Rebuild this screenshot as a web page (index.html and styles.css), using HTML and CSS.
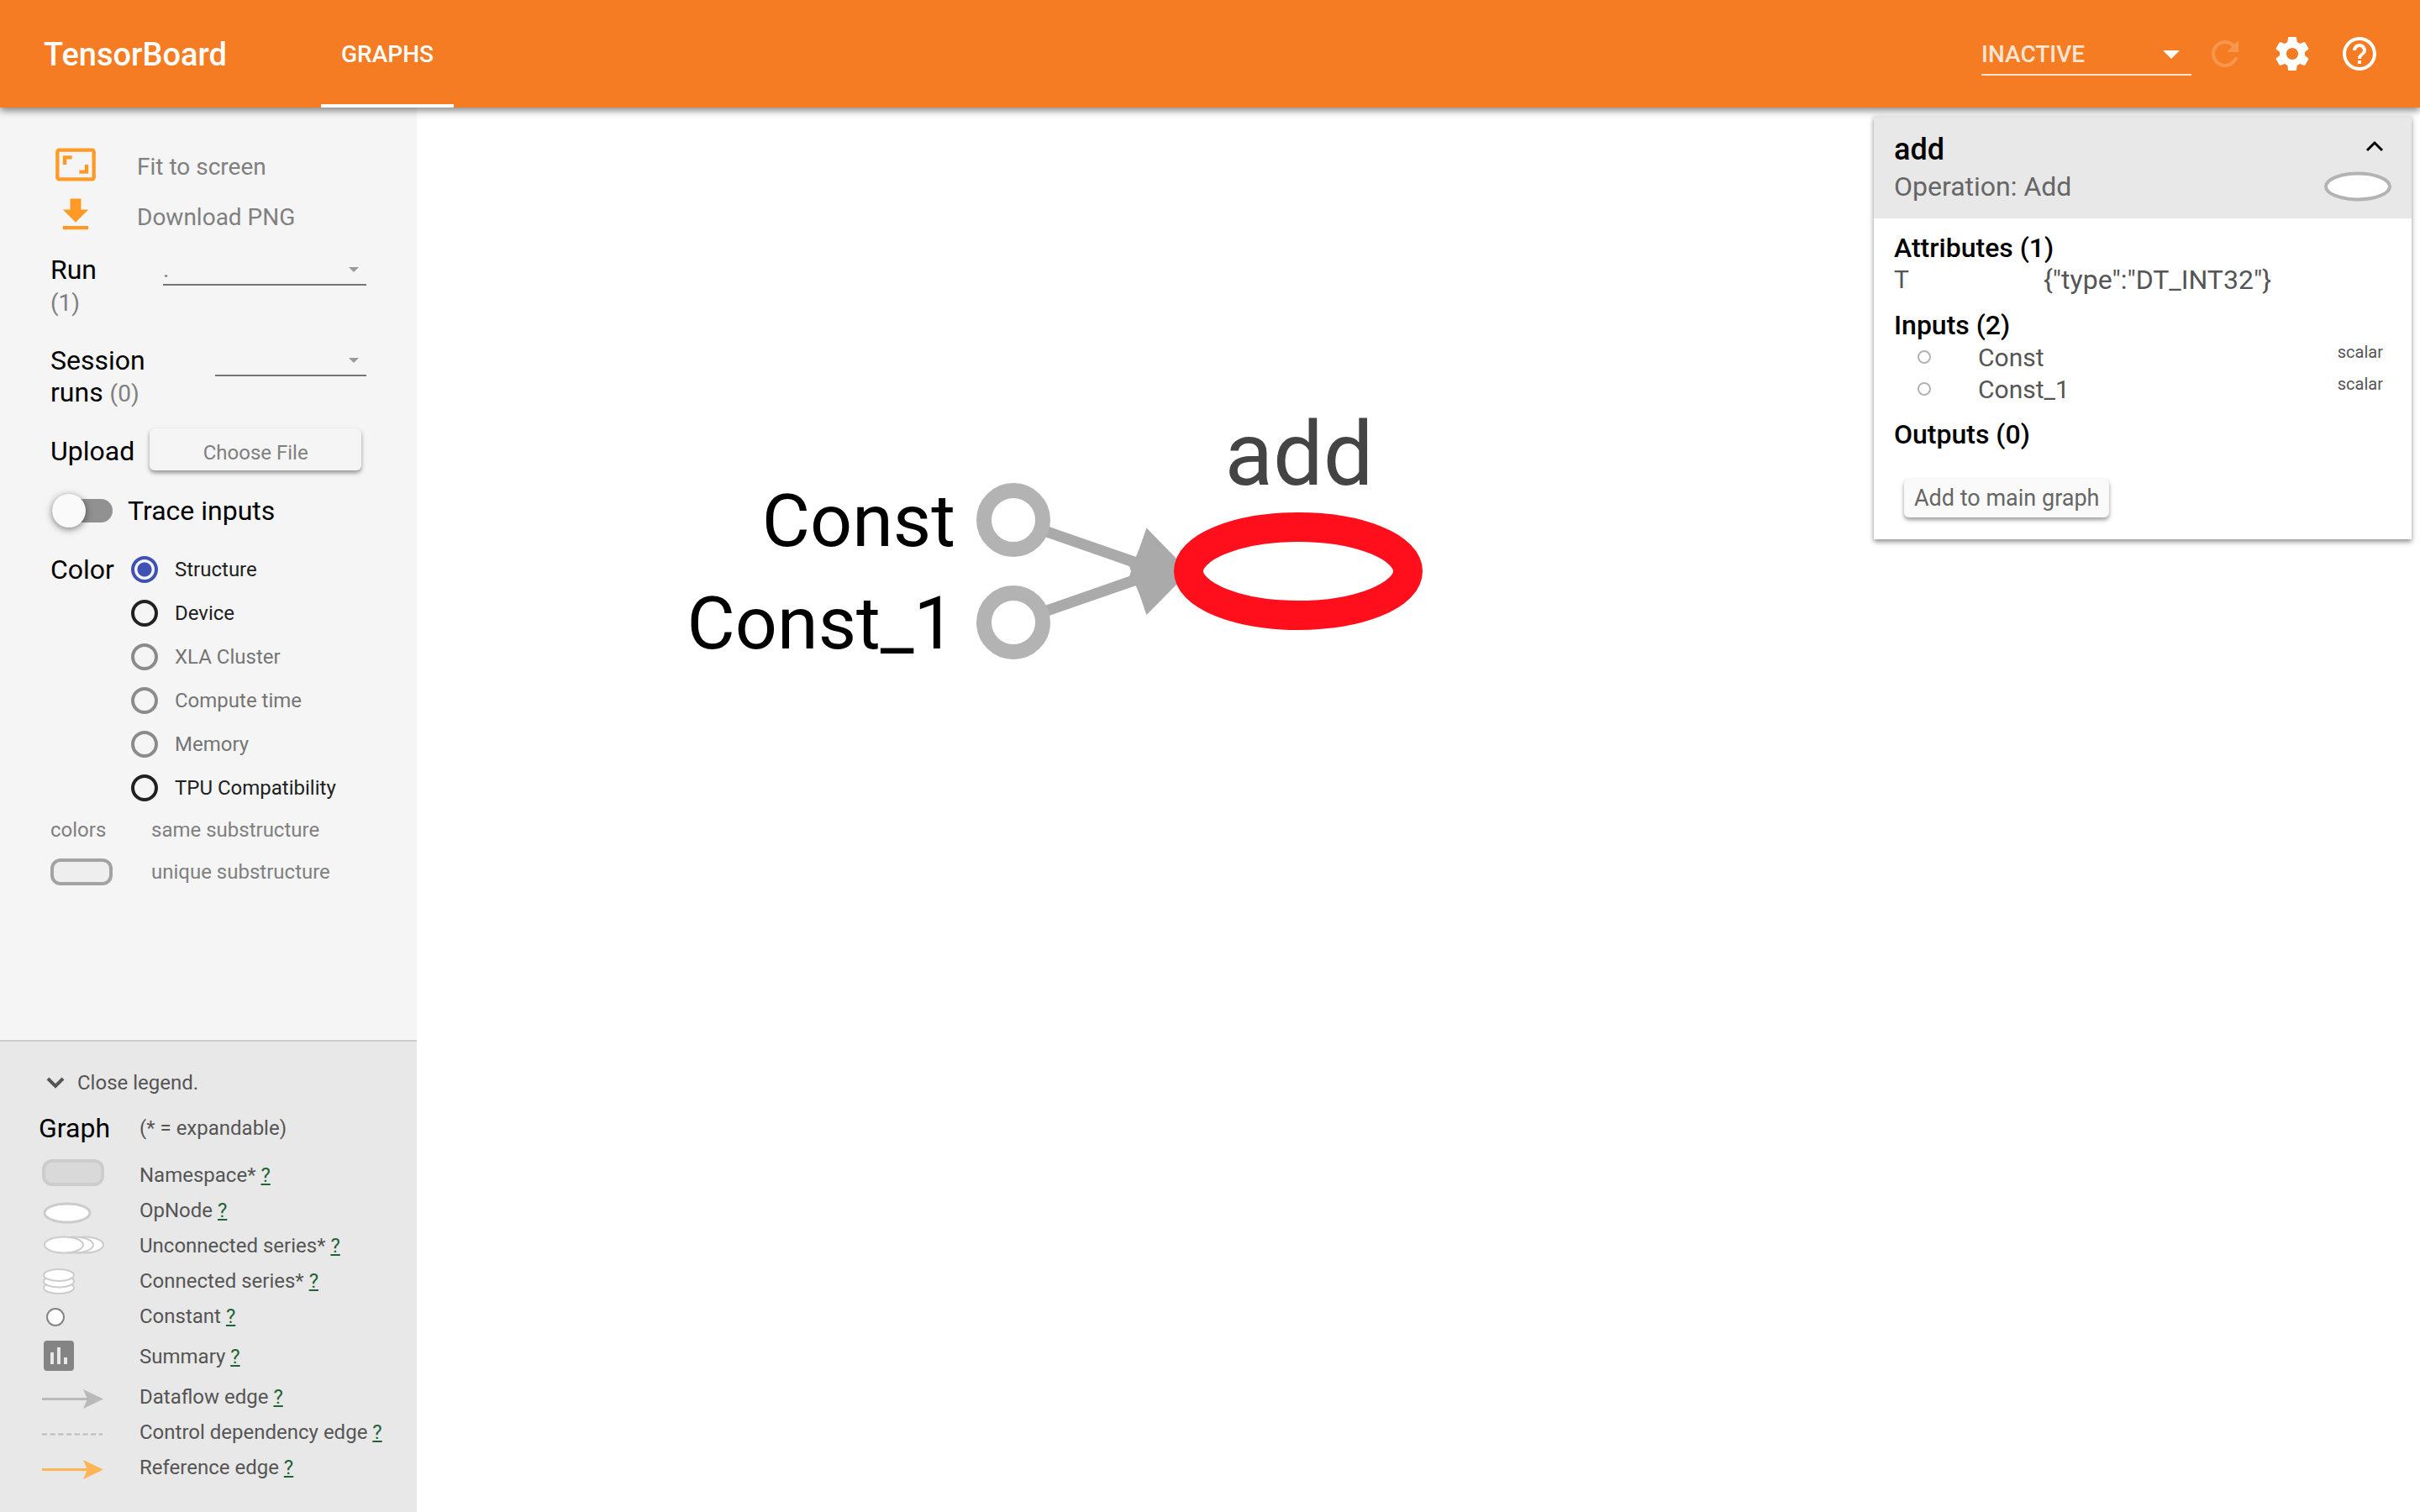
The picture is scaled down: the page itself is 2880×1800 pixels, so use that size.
FILE: index.html
```html
<!DOCTYPE html>
<html lang="en">
<head>
<meta charset="utf-8">
<title>TensorBoard</title>
<link rel="stylesheet" href="styles.css">
</head>
<body>
<header class="toolbar">
  <h1 class="brand">TensorBoard</h1>
  <nav class="tabs"><a class="tab" href="#graphs">GRAPHS</a></nav>
  <div class="toolbar-actions">
    <div class="field field-light">
      <select class="field-select" aria-label="Inactive dashboards"><option>INACTIVE</option></select>
    </div>
    <button class="icon-button" aria-label="Reload" disabled>
      <svg viewBox="0 0 24 24"><path d="M17.65 6.35C16.2 4.9 14.21 4 12 4c-4.42 0-7.99 3.58-7.99 8s3.57 8 7.99 8c3.73 0 6.84-2.55 7.73-6h-2.08c-.82 2.33-3.04 4-5.65 4-3.31 0-6-2.69-6-6s2.69-6 6-6c1.66 0 3.14.69 4.22 1.78L13 11h7V4l-2.35 2.35z"/></svg>
    </button>
    <button class="icon-button" aria-label="Settings">
      <svg viewBox="0 0 24 24"><path d="M19.43 12.98c.04-.32.07-.64.07-.98s-.03-.66-.07-.98l2.11-1.65c.19-.15.24-.42.12-.64l-2-3.46c-.12-.22-.39-.3-.61-.22l-2.49 1c-.52-.4-1.08-.73-1.69-.98l-.38-2.65C14.46 2.18 14.25 2 14 2h-4c-.25 0-.46.18-.49.42l-.38 2.65c-.61.25-1.17.59-1.69.98l-2.49-1c-.23-.09-.49 0-.61.22l-2 3.46c-.13.22-.07.49.12.64l2.11 1.65c-.04.32-.07.65-.07.98s.03.66.07.98l-2.11 1.65c-.19.15-.24.42-.12.64l2 3.46c.12.22.39.3.61.22l2.49-1c.52.4 1.08.73 1.69.98l.38 2.65c.03.24.24.42.49.42h4c.25 0 .46-.18.49-.42l.38-2.65c.61-.25 1.17-.59 1.69-.98l2.49 1c.23.09.49 0 .61-.22l2-3.46c.12-.22.07-.49-.12-.64l-2.11-1.65zM12 15.5c-1.93 0-3.5-1.57-3.5-3.5s1.57-3.5 3.5-3.5 3.5 1.57 3.5 3.5-1.57 3.5-3.5 3.5z"/></svg>
    </button>
    <button class="icon-button" aria-label="Help">
      <svg viewBox="0 0 24 24"><path d="M11 18h2v-2h-2v2zm1-16C6.48 2 2 6.48 2 12s4.480 10 10 10 10-4.480 10-10S17.520 2 12 2zm0 18c-4.410 0-8-3.590-8-8s3.590-8 8-8 8 3.590 8 8-3.590 8-8 8zm0-14c-2.210 0-4 1.790-4 4h2c0-1.100.9-2 2-2s2 .9 2 2c0 2-3 1.750-3 5h2c0-2.250 3-2.500 3-5 0-2.210-1.790-4-4-4z"/></svg>
    </button>
  </div>
</header>

<div class="dashboard">
  <aside class="sidebar">
    <form class="controls">
      <button class="action" type="button">
        <svg viewBox="0 0 24 24"><path d="M19 12h-2v3h-3v2h5v-5zM7 9h3V7H5v5h2V9zm14-6H3c-1.100 0-2 .9-2 2v14c0 1.100.9 2 2 2h18c1.100 0 2-.9 2-2V5c0-1.100-.9-2-2-2zm0 16.010H3V4.990h18v14.020z"/></svg>
        <span>Fit to screen</span>
      </button>
      <button class="action" type="button">
        <svg viewBox="0 0 24 24"><path d="M19 9h-4V3H9v6H5l7 7 7-7zM5 18v2h14v-2H5z"/></svg>
        <span>Download PNG</span>
      </button>

      <div class="control-row run-row">
        <label class="control-label" for="run">Run <small class="count">(1)</small></label>
        <div class="field field-run"><select class="field-select" id="run"><option>.</option></select></div>
      </div>
      <div class="control-row session-row">
        <label class="control-label" for="session">Session runs <small class="count">(0)</small></label>
        <div class="field field-session"><select class="field-select" id="session"><option></option></select></div>
      </div>
      <div class="upload-row">
        <span class="control-label" id="upload-label">Upload</span>
        <button class="raised-button upload-button" type="button" aria-describedby="upload-label">Choose File</button>
      </div>
      <label class="toggle-row">
        <input class="toggle" type="checkbox">
        <span class="control-label">Trace inputs</span>
      </label>
      <div class="color-row" role="radiogroup" aria-labelledby="color-label">
        <span class="control-label" id="color-label">Color</span>
        <div class="radio-list">
          <label class="radio"><input type="radio" name="color" checked>Structure</label>
          <label class="radio"><input type="radio" name="color">Device</label>
          <label class="radio"><input type="radio" name="color" disabled>XLA Cluster</label>
          <label class="radio"><input type="radio" name="color" disabled>Compute time</label>
          <label class="radio"><input type="radio" name="color" disabled>Memory</label>
          <label class="radio"><input type="radio" name="color">TPU Compatibility</label>
        </div>
      </div>
      <div class="color-key">
        <span>colors</span><span>same substructure</span>
        <span class="swatch"></span><span>unique substructure</span>
      </div>
    </form>

    <section class="legend">
      <button class="legend-toggle" type="button">
        <svg viewBox="0 0 36 36"><path d="M9 13l9 9 9-9" fill="none" stroke="currentColor" stroke-width="4"/></svg>
        Close legend.
      </button>
      <div class="legend-head"><h2 class="legend-title">Graph</h2><span>(* = expandable)</span></div>
      <ul class="legend-list">
        <li>
          <svg viewBox="0 0 76 42"><rect x="4" y="4" width="70" height="28" rx="10" fill="#d9d9d9" stroke="#ccc" stroke-width="4"/></svg>
          <span>Namespace* <a href="#namespace">?</a></span>
        </li>
        <li>
          <svg viewBox="0 0 76 42"><ellipse cx="32" cy="24" rx="27" ry="11" fill="#fff" stroke="#ccc" stroke-width="3"/></svg>
          <span>OpNode <a href="#opnode">?</a></span>
        </li>
        <li>
          <svg viewBox="0 0 76 42"><g fill="#fff" stroke="#ccc" stroke-width="2"><ellipse cx="52" cy="20" rx="23" ry="9.500"/><ellipse cx="40" cy="20" rx="23" ry="9.500"/><ellipse cx="28" cy="20" rx="23" ry="9.500"/></g></svg>
          <span>Unconnected series* <a href="#unconnected">?</a></span>
        </li>
        <li>
          <svg viewBox="0 0 76 42"><g fill="#fff" stroke="#ccc" stroke-width="2"><ellipse cx="22" cy="29" rx="18" ry="7"/><ellipse cx="22" cy="21.500" rx="18" ry="7"/><ellipse cx="22" cy="14" rx="18" ry="7"/></g></svg>
          <span>Connected series* <a href="#connected">?</a></span>
        </li>
        <li>
          <svg viewBox="0 0 76 42"><circle cx="18" cy="22" r="10" fill="#fff" stroke="#848484" stroke-width="2"/></svg>
          <span>Constant <a href="#constant">?</a></span>
        </li>
        <li class="legend-summary">
          <svg viewBox="0 0 76 42"><path fill="#848484" fill-rule="evenodd" d="M8 2h28a4 4 0 0 1 4 4v28a4 4 0 0 1-4 4H8a4 4 0 0 1-4-4V6a4 4 0 0 1 4-4zM12 16v14h4V16zM20 10v20h4V10zM28 22v8h4v-8z"/></svg>
          <span>Summary <a href="#summary">?</a></span>
        </li>
        <li>
          <svg viewBox="0 0 76 42"><path d="M2 23.500h56" stroke="#b9b9b9" stroke-width="3"/><path fill="#b9b9b9" d="M51 12l24 11.500L51 35l5-11.500z"/></svg>
          <span>Dataflow edge <a href="#dataflow">?</a></span>
        </li>
        <li>
          <svg viewBox="0 0 76 42"><path d="M2 23.500h72" stroke="#b9b9b9" stroke-width="2" stroke-dasharray="6 3.700"/></svg>
          <span>Control dependency edge <a href="#control">?</a></span>
        </li>
        <li>
          <svg viewBox="0 0 76 42"><path d="M2 23.500h56" stroke="#ffb555" stroke-width="3"/><path fill="#ffb555" d="M51 12l24 11.500L51 35l5-11.500z"/></svg>
          <span>Reference edge <a href="#reference">?</a></span>
        </li>
      </ul>
    </section>
  </aside>

  <main class="canvas">
    <svg class="graph" aria-label="Graph">
      <path class="edge" d="M710 491L862 544M710 613L862 560"/>
      <path class="arrow" d="M868.500 500.500L905 538L921 552L905 567L868.500 604L860 579.500L855 567.500L853 560.500L847 561.500L850 552L847 543L853 543.500L855 537L860 524.500z"/>
      <circle class="const" cx="710" cy="491" r="35"/>
      <circle class="const" cx="710" cy="613" r="35"/>
      <ellipse class="op" cx="1049" cy="552" rx="130.500" ry="52.500"/>
      <text class="const-name" x="641" y="522">Const</text>
      <text class="const-name" x="641" y="644">Const_1</text>
      <text class="op-name" x="1050" y="449">add</text>
    </svg>

    <section class="info">
      <header class="info-head">
        <div class="info-line">
          <h2 class="info-title">add</h2>
          <button class="info-toggle" aria-label="Collapse">
            <svg viewBox="0 0 24 24"><path d="M3 17l9-9 9 9" fill="none" stroke="currentColor" stroke-width="3"/></svg>
          </button>
        </div>
        <div class="info-line info-sub">
          <span>Operation: Add</span>
          <svg class="info-shape" viewBox="0 0 80 36"><ellipse cx="40" cy="18" rx="38" ry="15.500" fill="#fff" stroke="#b3b3b3" stroke-width="4"/></svg>
        </div>
      </header>
      <div class="info-body">
        <h3 class="info-section">Attributes (1)</h3>
        <dl class="attributes"><dt>T</dt><dd>{"type":"DT_INT32"}</dd></dl>
        <h3 class="info-section">Inputs (2)</h3>
        <ul class="inputs">
          <li><svg viewBox="0 0 20 20"><circle cx="10" cy="10" r="7" fill="#fff" stroke="#b3b3b3" stroke-width="2"/></svg><a href="#const">Const</a><span class="shape">scalar</span></li>
          <li><svg viewBox="0 0 20 20"><circle cx="10" cy="10" r="7" fill="#fff" stroke="#b3b3b3" stroke-width="2"/></svg><a href="#const_1">Const_1</a><span class="shape">scalar</span></li>
        </ul>
        <h3 class="info-section">Outputs (0)</h3>
        <button class="raised-button add-button">Add to main graph</button>
      </div>
    </section>
  </main>
</div>
</body>
</html>
```
FILE: styles.css
```css
* { box-sizing: border-box; }

body {
  margin: 0;
  min-height: 100vh;
  display: flex;
  flex-direction: column;
  font-family: Roboto, "Liberation Sans", sans-serif;
  background: #fff;
}

h1, h2, h3, ul, dl, dd { margin: 0; padding: 0; font-weight: 400; list-style: none; }

button, select {
  margin: 0;
  padding: 0;
  border: 0;
  background: none;
  font: inherit;
  color: inherit;
}

svg { display: block; flex: none; }

/* Toolbar */
.toolbar {
  position: relative;
  z-index: 2;
  display: flex;
  align-items: center;
  height: 128px;
  padding: 0 48px 0 52px;
  background: #f57c22;
  color: #fff;
  box-shadow: 0 4px 8px rgba(0, 0, 0, .45);
}

.brand { width: 330px; padding-top: 2px; font-size: 38px; line-height: 48px; font-weight: 500; }
.tabs { align-self: stretch; display: flex; }

.tab {
  display: flex;
  align-items: center;
  padding: 4px 24px 0;
  border-bottom: 4px solid #fff;
  font-size: 28px;
  font-weight: 500;
  color: #fff;
  text-decoration: none;
}

.toolbar-actions { display: flex; align-items: center; margin-left: auto; }

.icon-button { display: flex; margin-left: 32px; color: #fff; }
.icon-button:disabled { margin-left: 16px; opacity: .2; }
.icon-button svg { width: 48px; height: 48px; fill: currentColor; }

/* Underlined drop-downs */
.field {
  position: relative;
  height: 38px;
  border-bottom: 2px solid #757575;
  color: #808080;
  font-size: 28px;
}

.field-select { display: block; width: 100%; height: 36px; appearance: none; }

.field::after {
  content: "";
  position: absolute;
  right: 9px;
  top: 16px;
  border: 6px solid transparent;
  border-top-color: #999;
  border-bottom: 0;
  pointer-events: none;
}

.field-light {
  width: 250px;
  height: 52px;
  border-bottom-color: #fde5d3;
  color: #fde5d3;
  font-weight: 500;
}

.field-light .field-select { height: 50px; padding-top: 2px; }

.field-light::after {
  right: 14px;
  top: 22px;
  border-width: 10px 10px 0;
  border-top-color: #fff;
}

.field-run { width: 242px; }
.field-session { width: 180px; }

/* Dashboard */
.dashboard { flex: 1; display: flex; }

.sidebar {
  display: flex;
  flex-direction: column;
  width: 496px;
  background: #f5f5f5;
}

.controls { padding: 38px 60px 40px; }

.action {
  display: flex;
  align-items: center;
  gap: 46px;
  height: 60px;
  padding-left: 4px;
  font-size: 28px;
  color: #808080;
}

.action svg { width: 52px; height: 52px; fill: #ff9a27; }
.action span { padding: 4px 0 0 1px; }

.control-row { display: flex; justify-content: space-between; }
.control-label { font-size: 32px; line-height: 38px; color: #000; }
.count { font-size: 28px; line-height: 1; color: #808080; }
.run-row { margin-top: 16px; }
.run-row .control-label { width: 60px; }
.session-row { margin-top: 32px; }
.session-row .control-label { width: 140px; }

.upload-row { display: flex; align-items: center; gap: 18px; margin-top: 24px; }
.upload-row .control-label { padding-top: 4px; }

.raised-button {
  border-radius: 6px;
  box-shadow: 0 3px 5px rgba(0, 0, 0, .4);
}

.upload-button {
  width: 252px;
  height: 50px;
  padding-top: 8px;
  background: #f5f5f5;
  font-size: 24px;
  color: #808080;
}

.toggle-row { display: flex; align-items: center; gap: 18px; height: 40px; margin-top: 28px; }

.toggle {
  appearance: none;
  display: flex;
  align-items: center;
  width: 72px;
  height: 28px;
  margin: 0 0 0 2px;
  border-radius: 14px;
  background: #919191;
}

.toggle::before {
  content: "";
  width: 40px;
  height: 40px;
  border-radius: 50%;
  background: #fafafa;
  box-shadow: 0 2px 8px rgba(0, 0, 0, .5);
}

.color-row { display: flex; margin-top: 24px; }
.color-row > .control-label { width: 96px; line-height: 52px; }

.radio {
  display: flex;
  align-items: center;
  gap: 20px;
  height: 52px;
  font-size: 24px;
  color: #212121;
}

.radio input {
  appearance: none;
  width: 32px;
  height: 32px;
  margin: 0;
  border: 4px solid #212121;
  border-radius: 50%;
}

.radio input:checked {
  border-color: #3f51b5;
  background: radial-gradient(circle, #3f51b5 8px, transparent 9px);
}

.radio:has(:disabled) { color: #757575; }
.radio input:disabled { border-color: #8b8b8b; }

.color-key {
  display: grid;
  grid-template-columns: 118px 1fr;
  grid-auto-rows: 48px;
  gap: 2px;
  align-items: center;
  font-size: 24px;
  color: #808080;
}

.swatch {
  width: 74px;
  height: 32px;
  border: 4px solid #a3a3a3;
  border-radius: 12px;
  background: #eee;
}

/* Legend */
.legend {
  margin-top: auto;
  padding: 24px 40px 32px 46px;
  border-top: 2px solid #ccc;
  background: #e8e8e8;
  font-size: 24px;
  color: #555;
}

.legend-toggle { display: flex; align-items: center; gap: 8px; height: 50px; padding-left: 2px; }
.legend-toggle svg { width: 36px; height: 36px; }

.legend-head { display: flex; align-items: center; height: 50px; margin: 4px 0 10px; }
.legend-title { width: 120px; font-size: 32px; color: #000; }

.legend-list li { display: flex; align-items: center; gap: 42px; height: 42px; padding-left: 2px; white-space: nowrap; }
.legend-list .legend-summary { height: 54px; }
.legend-list svg { width: 76px; height: 42px; }
.legend-list a { color: #1f6334; }

/* Graph canvas */
.canvas { position: relative; flex: 1; display: flex; }
.graph { flex: 1; width: 100%; }
.edge { stroke: #aaa; stroke-width: 13px; }
.arrow { fill: #aaa; }
.const { fill: #fff; stroke: #b3b3b3; stroke-width: 18px; }
.op { fill: #fff; stroke: #ff0f1b; stroke-width: 35px; }
.const-name { font-size: 88px; text-anchor: end; fill: #000; }
.op-name { font-size: 106px; text-anchor: middle; fill: #444; }

/* Node info card, floating over the canvas */
.info {
  position: absolute;
  top: 10px;
  right: 10px;
  width: 640px;
  background: #fff;
  color: #555;
  font-size: 30px;
  box-shadow: 0 3px 6px rgba(0, 0, 0, .45);
}

.info-head { padding: 16px 24px 18px; background: #e8e8e8; }
.info-line { display: flex; justify-content: space-between; align-items: center; height: 48px; }
.info-title { font-size: 36px; font-weight: 500; color: #000; }
.info-toggle { width: 24px; height: 24px; margin: 0 8px 8px 0; color: #000; }
.info-sub { height: 40px; font-size: 32px; color: #666; }
.info-shape { width: 80px; height: 36px; }

.info-body { padding: 16px 24px 26px; }
.info-section { font-size: 32px; line-height: 38px; font-weight: 500; color: #000; }
.attributes { display: flex; line-height: 38px; margin-bottom: 16px; }
.attributes dt { width: 178px; }
.attributes dd { font-size: 32px; }

.inputs { margin-bottom: 16px; }
.inputs li { display: flex; align-items: center; height: 38px; padding: 0 10px 0 26px; }
.inputs svg { width: 20px; height: 20px; margin-right: 54px; }
.inputs a { color: inherit; text-decoration: none; }
.shape { margin-left: auto; padding-bottom: 12px; font-size: 20px; }

.add-button {
  display: block;
  height: 46px;
  margin: 34px 0 0 12px;
  padding: 0 12px;
  background: #fafafa;
  font-size: 27px;
  color: #666;
}
```
